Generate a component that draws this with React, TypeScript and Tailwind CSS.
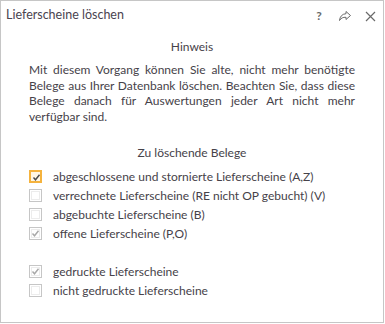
import React from 'react';

const rows: { label: string; state: 'focus' | 'off' | 'on' | 'gap' }[] = [
  { label: 'abgeschlossene und stornierte Lieferscheine (A,Z)', state: 'focus' },
  { label: 'verrechnete Lieferscheine (RE nicht OP gebucht) (V)', state: 'off' },
  { label: 'abgebuchte Lieferscheine (B)', state: 'off' },
  { label: 'offene Lieferscheine (P,O)', state: 'on' },
  { label: '', state: 'gap' },
  { label: 'gedruckte Lieferscheine', state: 'on' },
  { label: 'nicht gedruckte Lieferscheine', state: 'off' },
];

const Check: React.FC<{ color: string }> = ({ color }) => (
  <svg width="9" height="9" viewBox="0 0 9 9" className="absolute left-[1px] top-[1px]">
    <path d="M1.5 4.5 L3.5 6.8 L7.5 1.8" fill="none" stroke={color} strokeWidth="1.4" />
  </svg>
);

const Box: React.FC<{ state: 'focus' | 'off' | 'on' }> = ({ state }) => {
  if (state === 'focus') {
    return (
      <div className="relative w-[13px] h-[13px] border-2 border-[#f5b33e] bg-[#fff6e4]">
        <Check color="#4a4a4a" />
      </div>
    );
  }
  return (
    <div className="relative w-[13px] h-[13px] border border-[#c6c6c6] bg-white p-[1px]">
      <div className="w-full h-full border border-[#ececec]" />
      {state === 'on' && <Check color="#a8a8a8" />}
    </div>
  );
};

export default function App() {
  return (
    <div
      className="w-[384px] h-[323px] border border-[#c6c6c6] bg-white text-[#464249] text-[12px] flex flex-col"
      style={{ fontFamily: 'Lato, "Noto Sans", sans-serif' }}
    >
      {/* Title bar */}
      <div className="h-[30px] flex items-center pl-[5px] pr-[7px]">
        <span className="text-[12.5px] text-[#4a4450] -mt-[1px]">Lieferscheine löschen</span>
        <div className="ml-auto flex items-center gap-[13px] text-[#6a6a6a]">
          <span className="text-[12px] font-bold w-[12px] text-center">?</span>
          <svg width="14" height="12" viewBox="0 0 14 12">
            <path
              d="M8 1.5 L12.5 5.5 L8 9.5 V7.3 C5 7.1 3 8 1.5 10.5 C2 6.5 4 4 8 3.7 Z"
              fill="none"
              stroke="#6a6a6a"
              strokeWidth="1"
              strokeLinejoin="round"
            />
          </svg>
          <svg width="11" height="11" viewBox="0 0 11 11">
            <path d="M1 1 L10 10 M10 1 L1 10" stroke="#6a6a6a" strokeWidth="1.2" />
          </svg>
        </div>
      </div>

      {/* Hinweis */}
      <div className="text-center mt-[8px] leading-[15px]">Hinweis</div>
      <div className="mx-[28px] mt-[8px] leading-[15.5px]">
        <div className="text-justify [text-align-last:justify]">Mit diesem Vorgang können Sie alte, nicht mehr benötigte</div>
        <div className="text-justify [text-align-last:justify]">Belege aus Ihrer Datenbank löschen. Beachten Sie, dass diese</div>
        <div className="text-justify [text-align-last:justify]">Belege danach für Auswertungen jeder Art nicht mehr</div>
        <div>verfügbar sind.</div>
      </div>

      {/* Zu löschende Belege */}
      <div className="text-center mt-[21px] leading-[15px]">Zu löschende Belege</div>
      <div className="mt-[7px] pl-[28px] flex flex-col">
        {rows.map((r, i) =>
          r.state === 'gap' ? (
            <div key={i} className="h-[19px]" />
          ) : (
            <div key={i} className="h-[19px] flex items-center gap-[11px]">
              <Box state={r.state} />
              <span className="leading-[15px]">{r.label}</span>
            </div>
          )
        )}
      </div>
    </div>
  );
}
